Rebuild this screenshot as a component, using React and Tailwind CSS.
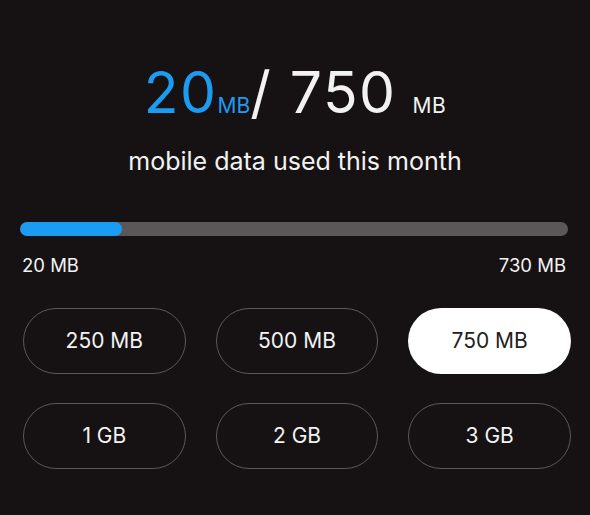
const plans = ["250 MB", "500 MB", "750 MB", "1 GB", "2 GB", "3 GB"];

export default function App() {
  const used = 20;
  const total = 750;
  const selected = "750 MB";

  return (
    <div
      className="w-[590px] h-[515px] bg-[#161213] text-[#f2f2f2] overflow-hidden"
      style={{ fontFamily: "Inter, 'Liberation Sans', sans-serif" }}
    >
      <div className="flex items-baseline justify-center pt-[64px] leading-none">
        <span className="text-[57px] text-[#1d9bf0] tracking-[1.5px]">{used}</span>
        <span className="text-[21px] text-[#1d9bf0]">MB</span>
        <span className="text-[57px] tracking-[1.5px]">/ {total}</span>
        <span className="text-[21px] ml-[16px] tracking-[0.5px]">MB</span>
      </div>

      <p className="text-center text-[25px] mt-[28px] leading-none">mobile data used this month</p>

      <div className="mt-[48px] ml-[20px] mr-[22px]">
        <div className="h-[14px] rounded-full bg-[#5a5758] overflow-hidden">
          <div className="h-full rounded-full bg-[#1a9cf2]" style={{ width: `${(102 / 548) * 100}%` }} />
        </div>
        <div className="flex justify-between mt-[20px] text-[18.5px] leading-none px-[2px]">
          <span>20 MB</span>
          <span>730 MB</span>
        </div>
      </div>

      <div className="grid grid-cols-3 gap-x-[30px] gap-y-[29px] mt-[33px] ml-[23px] mr-[19px]">
        {plans.map((p) =>
          p === selected ? (
            <button key={p} className="h-[66px] rounded-full bg-white text-[#222] text-[21px]">
              {p}
            </button>
          ) : (
            <button key={p} className="h-[66px] rounded-full border-[1.5px] border-[#5b5859] text-[21px]">
              {p}
            </button>
          )
        )}
      </div>
    </div>
  );
}
